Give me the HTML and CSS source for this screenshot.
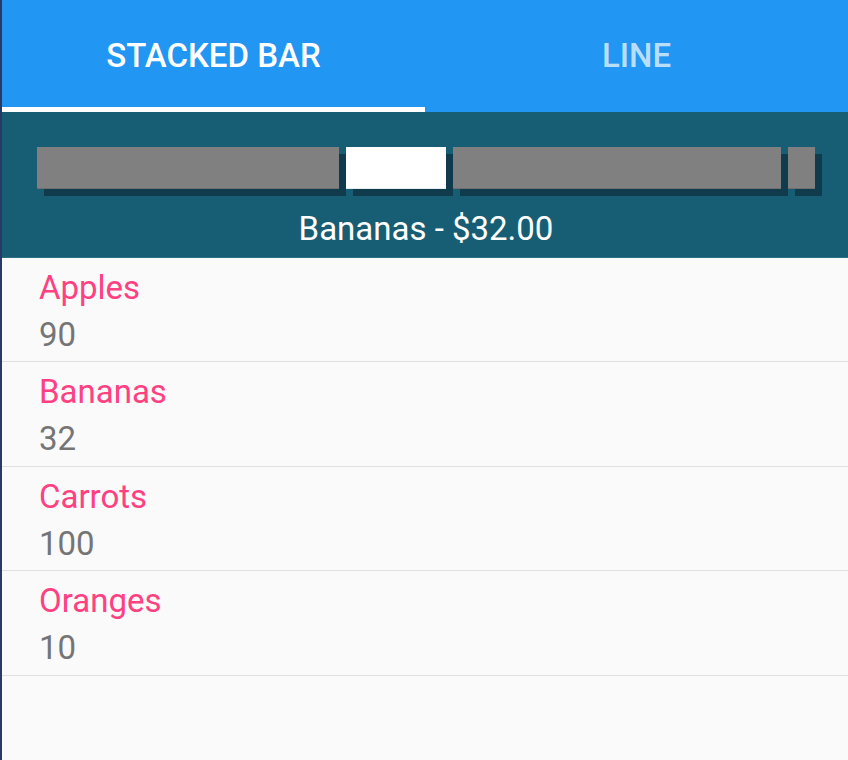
FILE: index.html
```html
<!DOCTYPE html>
<html>
<head>
<meta charset="utf-8">
<link rel="stylesheet" href="styles.css">
</head>
<body>
<div class="app">
  <nav class="tabs">
    <div class="tab active">STACKED BAR</div>
    <div class="tab">LINE</div>
  </nav>
  <section class="chart">
    <div class="bars">
      <div class="bar" style="width:302px"></div>
      <div class="bar selected" style="width:100px"></div>
      <div class="bar" style="width:328px"></div>
      <div class="bar" style="width:27px"></div>
    </div>
    <div class="caption">Bananas - $32.00</div>
  </section>
  <ul class="list">
    <li class="row"><div class="name">Apples</div><div class="value">90</div></li>
    <li class="row"><div class="name">Bananas</div><div class="value">32</div></li>
    <li class="row"><div class="name">Carrots</div><div class="value">100</div></li>
    <li class="row"><div class="name">Oranges</div><div class="value">10</div></li>
  </ul>
</div>
</body>
</html>
```
FILE: styles.css
```css
html, body {
  margin: 0;
  padding: 0;
  height: 100%;
}
body {
  background: #fafafa;
  font-family: Roboto, "Liberation Sans", sans-serif;
}
.app {
  min-height: 760px;
  border-left: 2px solid #283a66;
  box-sizing: border-box;
  background: #fafafa;
}
.tabs {
  display: flex;
  height: 112px;
  background: #2196f3;
}
.tab {
  flex: 1;
  display: flex;
  align-items: center;
  justify-content: center;
  font-size: 33px;
  font-weight: 500;
  color: rgba(255, 255, 255, 0.7);
  box-sizing: border-box;
  border-bottom: 5px solid transparent;
  padding-top: 4px;
}
.tab.active {
  color: #ffffff;
  border-bottom-color: #ffffff;
}
.chart {
  background: #175e74;
  height: 146px;
  box-sizing: border-box;
  padding: 35px 33px 0 35px;
  border-bottom: 1px solid #2b6f84;
}
.bars {
  display: flex;
  gap: 7px;
  height: 42px;
}
.bar {
  background: #808080;
  box-shadow: 7px 7px 0 #0f3b4c;
  border-bottom: 1px solid #6f6f6f;
  box-sizing: border-box;
}
.bar.selected {
  background: #ffffff;
  border-bottom-color: #e6eef0;
}
.caption {
  margin-top: 22px;
  text-align: center;
  color: #ffffff;
  font-size: 33px;
  line-height: 36px;
}
.list {
  list-style: none;
  margin: 0;
  padding: 0;
}
.row {
  height: 104px;
  box-sizing: border-box;
  border-bottom: 1px solid #e0e0e0;
  padding: 10px 37px 0;
}
.row:nth-child(even) {
  height: 105px;
}
.name {
  color: #ff4081;
  font-size: 33px;
  line-height: 40px;
}
.value {
  color: #757575;
  font-size: 33px;
  line-height: 48px;
  margin-top: 3px;
}
```
